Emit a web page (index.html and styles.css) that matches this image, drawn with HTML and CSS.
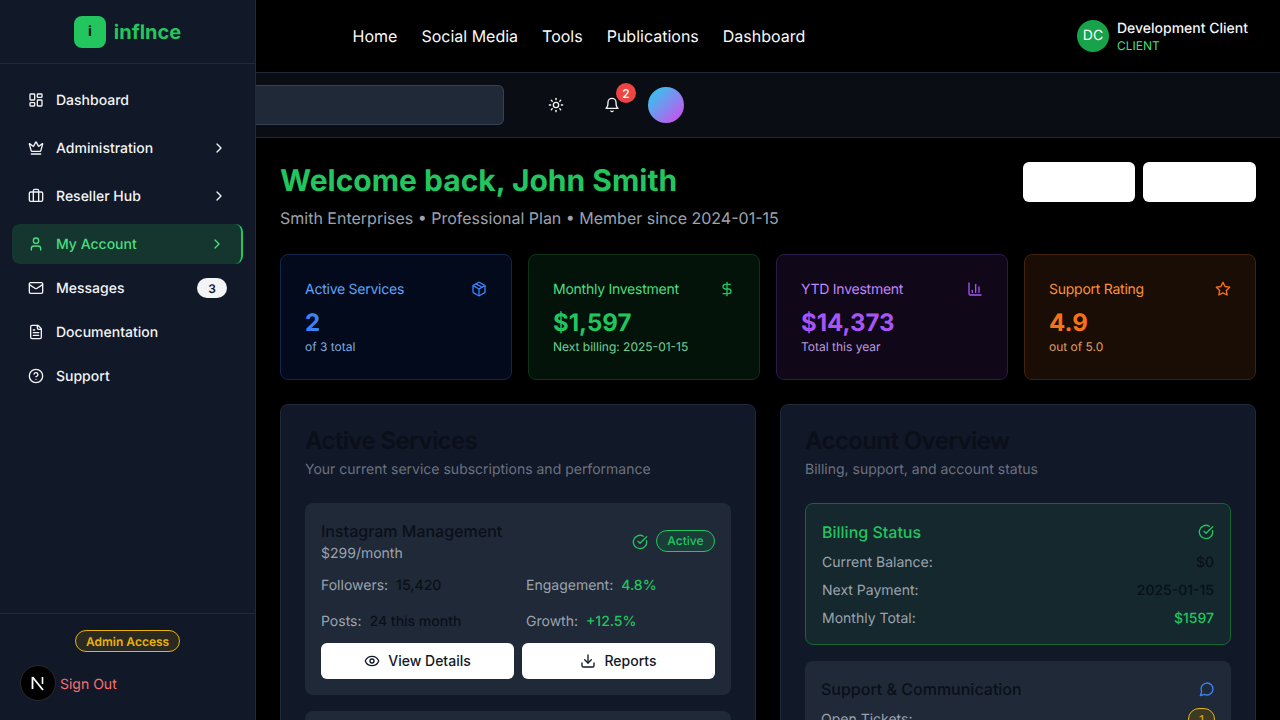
FILE: index.html
```html
<!DOCTYPE html>
<html lang="en">
<head>
  <meta charset="UTF-8">
  <title>inflnce - Dashboard</title>
  <link rel="stylesheet" href="styles.css">
</head>
<body>
  <svg class="sprite" xmlns="http://www.w3.org/2000/svg">
    <symbol id="i-dashboard" viewBox="0 0 24 24"><rect x="3" y="3" width="7" height="9" rx="1"/><rect x="14" y="3" width="7" height="5" rx="1"/><rect x="14" y="12" width="7" height="9" rx="1"/><rect x="3" y="16" width="7" height="5" rx="1"/></symbol>
    <symbol id="i-crown" viewBox="0 0 24 24"><path d="M11.562 3.266a.5.5 0 0 1 .876 0L15.39 8.87a1 1 0 0 0 1.516.294L21.183 5.5a.5.5 0 0 1 .798.519l-2.834 10.246a1 1 0 0 1-.956.734H5.81a1 1 0 0 1-.957-.734L2.02 6.02a.5.5 0 0 1 .798-.519l4.276 3.664a1 1 0 0 0 1.516-.294z"/><path d="M5 21h14"/></symbol>
    <symbol id="i-briefcase" viewBox="0 0 24 24"><path d="M16 20V4a2 2 0 0 0-2-2h-4a2 2 0 0 0-2 2v16"/><rect x="2" y="6" width="20" height="14" rx="2"/></symbol>
    <symbol id="i-user" viewBox="0 0 24 24"><path d="M19 21v-2a4 4 0 0 0-4-4H9a4 4 0 0 0-4 4v2"/><circle cx="12" cy="7" r="4"/></symbol>
    <symbol id="i-mail" viewBox="0 0 24 24"><rect x="2" y="4" width="20" height="16" rx="2"/><path d="m22 7-8.97 5.7a1.94 1.94 0 0 1-2.06 0L2 7"/></symbol>
    <symbol id="i-file" viewBox="0 0 24 24"><path d="M15 2H6a2 2 0 0 0-2 2v16a2 2 0 0 0 2 2h12a2 2 0 0 0 2-2V7Z"/><path d="M14 2v4a2 2 0 0 0 2 2h4"/><path d="M10 9H8"/><path d="M16 13H8"/><path d="M16 17H8"/></symbol>
    <symbol id="i-help" viewBox="0 0 24 24"><circle cx="12" cy="12" r="10"/><path d="M9.09 9a3 3 0 0 1 5.83 1c0 2-3 3-3 3"/><path d="M12 17h.01"/></symbol>
    <symbol id="i-chevron" viewBox="0 0 24 24"><path d="m9 18 6-6-6-6"/></symbol>
    <symbol id="i-sun" viewBox="0 0 24 24"><circle cx="12" cy="12" r="4"/><path d="M12 2v2"/><path d="M12 20v2"/><path d="m4.93 4.93 1.41 1.41"/><path d="m17.66 17.66 1.41 1.41"/><path d="M2 12h2"/><path d="M20 12h2"/><path d="m6.34 17.66-1.41 1.41"/><path d="m19.07 4.93-1.41 1.41"/></symbol>
    <symbol id="i-bell" viewBox="0 0 24 24"><path d="M6 8a6 6 0 0 1 12 0c0 7 3 9 3 9H3s3-2 3-9"/><path d="M10.3 21a1.94 1.94 0 0 0 3.4 0"/></symbol>
    <symbol id="i-package" viewBox="0 0 24 24"><path d="M11 21.73a2 2 0 0 0 2 0l7-4A2 2 0 0 0 21 16V8a2 2 0 0 0-1-1.73l-7-4a2 2 0 0 0-2 0l-7 4A2 2 0 0 0 3 8v8a2 2 0 0 0 1 1.73z"/><path d="M12 22V12"/><path d="m3.3 7 8.7 5 8.7-5"/><path d="m7.5 4.27 9 5.15"/></symbol>
    <symbol id="i-dollar" viewBox="0 0 24 24"><path d="M12 2v20"/><path d="M17 5H9.5a3.5 3.5 0 0 0 0 7h5a3.5 3.5 0 0 1 0 7H6"/></symbol>
    <symbol id="i-chart" viewBox="0 0 24 24"><path d="M3 3v16a2 2 0 0 0 2 2h16"/><path d="M18 17V9"/><path d="M13 17V5"/><path d="M8 17v-3"/></symbol>
    <symbol id="i-star" viewBox="0 0 24 24"><path d="M12 2l3.09 6.26L22 9.27l-5 4.87 1.18 6.88L12 17.77l-6.18 3.25L7 14.14 2 9.27l6.91-1.01L12 2z"/></symbol>
    <symbol id="i-check" viewBox="0 0 24 24"><path d="M21.801 10A10 10 0 1 1 17 3.335"/><path d="m9 11 3 3L22 4"/></symbol>
    <symbol id="i-eye" viewBox="0 0 24 24"><path d="M2.062 12.348a1 1 0 0 1 0-.696 10.75 10.75 0 0 1 19.876 0 1 1 0 0 1 0 .696 10.75 10.75 0 0 1-19.876 0"/><circle cx="12" cy="12" r="3"/></symbol>
    <symbol id="i-download" viewBox="0 0 24 24"><path d="M21 15v4a2 2 0 0 1-2 2H5a2 2 0 0 1-2-2v-4"/><path d="m7 10 5 5 5-5"/><path d="M12 15V3"/></symbol>
    <symbol id="i-message" viewBox="0 0 24 24"><path d="M7.9 20A9 9 0 1 0 4 16.1L2 22Z"/></symbol>
  </svg>

  <div class="app">
    <aside class="sidebar">
      <div class="brand">
        <span class="brand-mark">i</span>
        <span class="brand-name">inflnce</span>
      </div>
      <nav class="side-nav">
        <a class="side-link group"><svg class="icon"><use href="#i-dashboard"/></svg><span class="side-label">Dashboard</span></a>
        <a class="side-link group"><svg class="icon"><use href="#i-crown"/></svg><span class="side-label">Administration</span><svg class="icon"><use href="#i-chevron"/></svg></a>
        <a class="side-link group"><svg class="icon"><use href="#i-briefcase"/></svg><span class="side-label">Reseller Hub</span><svg class="icon"><use href="#i-chevron"/></svg></a>
        <a class="side-link active"><svg class="icon"><use href="#i-user"/></svg><span class="side-label">My Account</span><svg class="icon"><use href="#i-chevron"/></svg></a>
        <a class="side-link"><svg class="icon"><use href="#i-mail"/></svg><span class="side-label">Messages</span><span class="count">3</span></a>
        <a class="side-link"><svg class="icon"><use href="#i-file"/></svg><span class="side-label">Documentation</span></a>
        <a class="side-link"><svg class="icon"><use href="#i-help"/></svg><span class="side-label">Support</span></a>
      </nav>
      <div class="side-footer">
        <span class="admin-pill">Admin Access</span>
        <a class="sign-out">Sign Out</a>
      </div>
    </aside>

    <div class="main">
      <header class="topbar">
        <nav class="top-nav">
          <a>Home</a>
          <a>Social Media</a>
          <a>Tools</a>
          <a>Publications</a>
          <a>Dashboard</a>
        </nav>
        <div class="user">
          <span class="user-avatar">DC</span>
          <div>
            <div class="user-name">Development Client</div>
            <div class="user-role">CLIENT</div>
          </div>
        </div>
      </header>

      <div class="toolbar">
        <div class="search"></div>
        <button class="tool-btn"><svg class="icon"><use href="#i-sun"/></svg></button>
        <button class="tool-btn bell"><svg class="icon"><use href="#i-bell"/></svg><span class="bell-count">2</span></button>
        <span class="profile"></span>
      </div>

      <main class="content">
        <div class="welcome">
          <div>
            <h1>Welcome back, John Smith</h1>
            <p>Smith Enterprises • Professional Plan • Member since 2024-01-15</p>
          </div>
          <div class="welcome-actions">
            <button class="blank-btn"></button>
            <button class="blank-btn wide"></button>
          </div>
        </div>

        <section class="stats">
          <div class="stat blue">
            <div class="stat-head"><span>Active Services</span><svg class="icon"><use href="#i-package"/></svg></div>
            <div class="stat-value">2</div>
            <div class="stat-sub">of 3 total</div>
          </div>
          <div class="stat green">
            <div class="stat-head"><span>Monthly Investment</span><svg class="icon"><use href="#i-dollar"/></svg></div>
            <div class="stat-value">$1,597</div>
            <div class="stat-sub">Next billing: 2025-01-15</div>
          </div>
          <div class="stat purple">
            <div class="stat-head"><span>YTD Investment</span><svg class="icon"><use href="#i-chart"/></svg></div>
            <div class="stat-value">$14,373</div>
            <div class="stat-sub">Total this year</div>
          </div>
          <div class="stat orange">
            <div class="stat-head"><span>Support Rating</span><svg class="icon"><use href="#i-star"/></svg></div>
            <div class="stat-value">4.9</div>
            <div class="stat-sub">out of 5.0</div>
          </div>
        </section>

        <section class="panels">
          <div class="panel">
            <h2>Active Services</h2>
            <p class="panel-sub">Your current service subscriptions and performance</p>

            <div class="inner">
              <div class="service-head">
                <div>
                  <h3>Instagram Management</h3>
                  <div class="price">$299/month</div>
                </div>
                <div class="service-status">
                  <svg class="icon ok"><use href="#i-check"/></svg>
                  <span class="active-pill">Active</span>
                </div>
              </div>
              <div class="metrics">
                <div class="metric"><span>Followers:</span><b>15,420</b></div>
                <div class="metric"><span>Engagement:</span><b class="up">4.8%</b></div>
                <div class="metric"><span>Posts:</span><b>24 this month</b></div>
                <div class="metric"><span>Growth:</span><b class="up">+12.5%</b></div>
              </div>
              <div class="service-actions">
                <button class="action"><svg class="icon"><use href="#i-eye"/></svg><span>View Details</span></button>
                <button class="action"><svg class="icon"><use href="#i-download"/></svg><span>Reports</span></button>
              </div>
            </div>

            <div class="inner"></div>
          </div>

          <div class="panel">
            <h2>Account Overview</h2>
            <p class="panel-sub">Billing, support, and account status</p>

            <div class="inner billing">
              <div class="inner-head">
                <h3>Billing Status</h3>
                <svg class="icon ok"><use href="#i-check"/></svg>
              </div>
              <div class="line"><span>Current Balance:</span><b>$0</b></div>
              <div class="line"><span>Next Payment:</span><b>2025-01-15</b></div>
              <div class="line"><span>Monthly Total:</span><b class="up">$1597</b></div>
            </div>

            <div class="inner">
              <div class="inner-head">
                <h3>Support &amp; Communication</h3>
                <svg class="icon chat"><use href="#i-message"/></svg>
              </div>
              <div class="line"><span>Open Tickets:</span><span class="ticket-count">1</span></div>
            </div>
          </div>
        </section>
      </main>
    </div>
  </div>

  <div class="next-badge">
    <svg width="18" height="18" viewBox="0 0 18 18" fill="none">
      <path d="M3.5 3v12" stroke="#fff" stroke-width="1.8"/>
      <path d="M3.5 3 14 16" stroke="#fff" stroke-width="1.8"/>
      <path d="M13.5 3v7" stroke="#fff" stroke-width="1.6"/>
    </svg>
  </div>
</body>
</html>
```

FILE: styles.css
```css
* { box-sizing: border-box; margin: 0; padding: 0; }
html, body { height: 100%; overflow: hidden; }
body {
  font-family: Inter, 'Noto Sans', sans-serif;
  background: #000;
  color: #fff;
  font-size: 14px;
  text-rendering: geometricPrecision;
}
a { color: inherit; text-decoration: none; }
button { font-family: inherit; border: none; background: none; color: inherit; }

.sprite { display: none; }
.icon {
  width: 16px;
  height: 16px;
  flex-shrink: 0;
  fill: none;
  stroke: currentColor;
  stroke-width: 2;
  stroke-linecap: round;
  stroke-linejoin: round;
}

.app { display: flex; height: 720px; }

/* sidebar */
.sidebar {
  width: 256px;
  flex-shrink: 0;
  background: #111827;
  border-right: 1px solid #1f2937;
  display: flex;
  flex-direction: column;
}
.brand {
  height: 64px;
  border-bottom: 1px solid #1f2937;
  display: flex;
  align-items: center;
  justify-content: center;
  gap: 8px;
}
.brand-mark {
  width: 32px;
  height: 32px;
  border-radius: 8px;
  background: #22c55e;
  color: #0a0f1a;
  font-size: 14px;
  font-weight: 700;
  display: flex;
  align-items: center;
  justify-content: center;
}
.brand-name { color: #22c55e; font-size: 20px; font-weight: 700; }

.side-nav {
  flex: 1;
  padding: 16px 12px;
  display: flex;
  flex-direction: column;
  gap: 4px;
}
.side-link {
  height: 40px;
  padding: 0 16px;
  border-radius: 8px;
  display: flex;
  align-items: center;
  gap: 12px;
  font-weight: 500;
  color: #f3f4f6;
}
.side-link.group { margin-bottom: 4px; }
.side-label { flex: 1; }
.side-link.active {
  background: #14362f;
  color: #4ade80;
  border-right: 2px solid #22c55e;
}
.count {
  width: 30px;
  height: 20px;
  border-radius: 10px;
  background: #f3f4f6;
  color: #111827;
  font-size: 12px;
  font-weight: 600;
  display: flex;
  align-items: center;
  justify-content: center;
}

.side-footer {
  height: 107px;
  border-top: 1px solid #1f2937;
  padding: 16px 0 0 60px;
  display: flex;
  flex-direction: column;
  align-items: flex-start;
}
.admin-pill {
  margin-left: 15px;
  height: 22px;
  padding: 0 10px;
  border: 1px solid #eab308;
  border-radius: 11px;
  background: #2b2a20;
  color: #eab308;
  font-size: 12px;
  font-weight: 600;
  display: flex;
  align-items: center;
}
.sign-out { margin-top: 24px; color: #f87171; line-height: 17px; }

.next-badge {
  position: fixed;
  left: 20px;
  top: 665px;
  width: 36px;
  height: 36px;
  border-radius: 50%;
  background: #000;
  border: 1px solid #2a2a2a;
  display: flex;
  align-items: center;
  justify-content: center;
}

/* top */
.main { flex: 1; min-width: 0; display: flex; flex-direction: column; }
.topbar {
  height: 73px;
  flex-shrink: 0;
  background: #000;
  border-bottom: 1px solid #1f2937;
  padding: 0 32px 1px 96.6px;
  display: flex;
  align-items: center;
  justify-content: space-between;
}
.top-nav { display: flex; gap: 24px; font-size: 16px; color: #f9fafb; }
.user { display: flex; align-items: center; gap: 8px; }
.user-avatar {
  width: 32px;
  height: 32px;
  border-radius: 50%;
  background: #16a34a;
  font-size: 14px;
  display: flex;
  align-items: center;
  justify-content: center;
}
.user-name { font-size: 14px; line-height: 22px; font-weight: 500; color: #f3f4f6; }
.user-role { margin-top: -2px; font-size: 12px; line-height: 16px; color: #4ade80; }

.toolbar {
  height: 65px;
  flex-shrink: 0;
  background: #0a0e14;
  border-bottom: 1px solid #1f2937;
  display: flex;
  align-items: center;
}
.search {
  width: 248px;
  height: 40px;
  background: #1f2937;
  border: 1px solid #374151;
  border-left: none;
  border-radius: 0 6px 6px 0;
}
.tool-btn {
  width: 40px;
  height: 40px;
  display: flex;
  align-items: center;
  justify-content: center;
  color: #f3f4f6;
  margin-left: 16px;
  position: relative;
}
.tool-btn:first-of-type { margin-left: 32px; }
.bell-count {
  position: absolute;
  top: -2px;
  right: -4px;
  width: 20px;
  height: 20px;
  border-radius: 50%;
  background: #ef4444;
  color: #fff;
  font-size: 12px;
  font-weight: 500;
  display: flex;
  align-items: center;
  justify-content: center;
}
.profile {
  width: 36px;
  height: 36px;
  margin-left: 16px;
  border-radius: 50%;
  background: linear-gradient(135deg, #22d3ee, #d946ef);
}

/* content */
.content { padding: 24px; }
.welcome { display: flex; justify-content: space-between; align-items: flex-start; }
.welcome h1 { font-size: 30px; line-height: 38px; font-weight: 700; color: #22c55e; }
.welcome p { margin-top: 6px; font-size: 16px; line-height: 24px; color: #9ca3af; }
.welcome-actions { display: flex; gap: 8px; }
.blank-btn { width: 112px; height: 40px; border-radius: 6px; background: #fff; }
.blank-btn.wide { width: 113px; }

.stats {
  margin-top: 24px;
  display: grid;
  grid-template-columns: repeat(4, 1fr);
  gap: 16px;
}
.stat {
  height: 126px;
  padding: 24px;
  border: 1px solid;
  border-radius: 8px;
}
.stat-head {
  height: 20px;
  display: flex;
  align-items: center;
  justify-content: space-between;
  font-size: 14px;
  letter-spacing: -0.25px;
}
.stat-value { margin-top: 8px; font-size: 24px; line-height: 32px; font-weight: 700; }
.stat-sub { font-size: 12px; line-height: 16px; opacity: 0.85; }
.stat.blue { background: #030a1c; border-color: #14264b; }
.stat.blue .stat-head { color: #60a5fa; }
.stat.blue .icon, .stat.blue .stat-value { color: #3b82f6; }
.stat.blue .stat-sub { color: #93c5fd; }
.stat.green { background: #04130a; border-color: #0d3319; }
.stat.green .stat-head { color: #4ade80; }
.stat.green .icon, .stat.green .stat-value { color: #22c55e; }
.stat.green .stat-sub { color: #86efac; }
.stat.purple { background: #100818; border-color: #2c1a48; }
.stat.purple .stat-head { color: #c084fc; }
.stat.purple .icon, .stat.purple .stat-value { color: #a855f7; }
.stat.purple .stat-sub { color: #d8b4fe; }
.stat.orange { background: #1a0d05; border-color: #43210d; }
.stat.orange .stat-head { color: #fb923c; }
.stat.orange .icon, .stat.orange .stat-value { color: #f97316; }
.stat.orange .stat-sub { color: #fdba74; }

.panels {
  margin-top: 24px;
  display: grid;
  grid-template-columns: 1fr 1fr;
  gap: 24px;
}
.panel {
  background: #111827;
  border: 1px solid #1f2937;
  border-radius: 8px;
  padding: 24px;
  height: 500px;
  display: flex;
  flex-direction: column;
  gap: 16px;
}
.panel h2 { font-size: 24px; line-height: 24px; font-weight: 600; letter-spacing: -0.6px; color: #0a0f1a; }
.panel-sub { margin: -9px 0 7px; font-size: 14px; line-height: 20px; color: #6b7280; }
.inner { background: #1f2937; border-radius: 8px; padding: 16px; flex-shrink: 0; min-height: 120px; }
.inner h3 { font-size: 16px; line-height: 24px; font-weight: 500; color: #0a0f1a; }

.service-head { display: flex; justify-content: space-between; align-items: center; }
.price { padding-top: 1px; line-height: 20px; color: #9ca3af; }
.service-status { display: flex; align-items: center; gap: 8px; }
.ok { color: #22c55e; }
.chat { color: #3b82f6; }
.active-pill {
  height: 22px;
  margin-bottom: 2px;
  padding: 0 10.5px 1px;
  border: 1px solid #22c55e;
  border-radius: 11px;
  background: #1a3d3a;
  color: #22c55e;
  font-size: 12px;
  font-weight: 500;
  display: flex;
  align-items: center;
}
.metrics {
  margin-top: 12px;
  display: grid;
  grid-template-columns: 1fr 1fr;
  gap: 16px;
}
.metric { display: flex; gap: 8px; line-height: 20px; color: #9ca3af; }
.metric b { font-weight: 500; color: #0a0f1a; }
.metrics .up, .line .up { color: #22c55e; }
.service-actions { margin-top: 11px; display: grid; grid-template-columns: 1fr 1fr; gap: 8px; }
.action {
  height: 36px;
  border-radius: 6px;
  background: #fff;
  color: #111827;
  font-size: 14px;
  font-weight: 500;
  display: flex;
  align-items: center;
  justify-content: center;
  gap: 8px;
}
.action span { padding-bottom: 2px; }

.billing { background: #14282e; border: 1px solid #166534; }
.billing h3 { color: #22c55e; }
.inner-head { display: flex; justify-content: space-between; align-items: center; }
.line {
  display: flex;
  justify-content: space-between;
  align-items: center;
  height: 20px;
  margin-top: 8px;
  color: #9ca3af;
}
.line b { font-weight: 500; color: #0a0f1a; }
.ticket-count {
  width: 27px;
  height: 22px;
  flex-shrink: 0;
  border: 1px solid #eab308;
  border-radius: 11px;
  background: #3d3a24;
  color: #eab308;
  font-size: 12px;
  display: flex;
  align-items: center;
  justify-content: center;
}
```
